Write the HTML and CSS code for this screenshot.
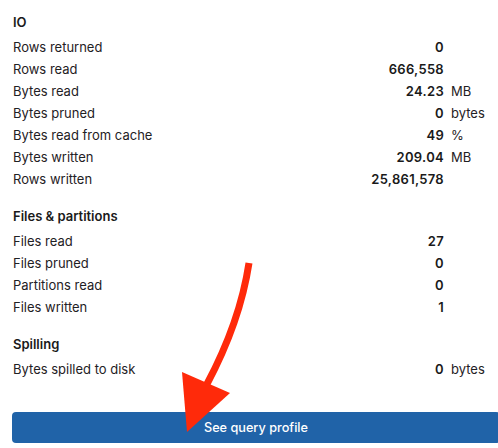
FILE: index.html
```html
<!DOCTYPE html>
<html>
<head>
<meta charset="utf-8">
<link rel="stylesheet" href="styles.css">
</head>
<body>
<div class="page">
  <section class="section">
    <h3 class="heading">IO</h3>
    <div class="grid">
      <span class="label">Rows returned</span><span class="value">0</span><span class="unit"></span>
      <span class="label">Rows read</span><span class="value">666,558</span><span class="unit"></span>
      <span class="label">Bytes read</span><span class="value">24.23</span><span class="unit">MB</span>
      <span class="label">Bytes pruned</span><span class="value">0</span><span class="unit">bytes</span>
      <span class="label">Bytes read from cache</span><span class="value">49</span><span class="unit">%</span>
      <span class="label">Bytes written</span><span class="value">209.04</span><span class="unit">MB</span>
      <span class="label">Rows written</span><span class="value">25,861,578</span><span class="unit"></span>
    </div>
  </section>
  <section class="section">
    <h3 class="heading">Files &amp; partitions</h3>
    <div class="grid">
      <span class="label">Files read</span><span class="value">27</span><span class="unit"></span>
      <span class="label">Files pruned</span><span class="value">0</span><span class="unit"></span>
      <span class="label">Partitions read</span><span class="value">0</span><span class="unit"></span>
      <span class="label">Files written</span><span class="value">1</span><span class="unit"></span>
    </div>
  </section>
  <section class="section">
    <h3 class="heading">Spilling</h3>
    <div class="grid">
      <span class="label">Bytes spilled to disk</span><span class="value">0</span><span class="unit">bytes</span>
    </div>
  </section>
  <button class="profile-btn">See query profile</button>
</div>
<svg class="arrow" width="498" height="448" viewBox="0 0 498 448">
  <path d="M249 263 Q240 322 207 384" fill="none" stroke="#ff2a0a" stroke-width="7" stroke-linecap="butt"/>
  <polygon points="182,372 230,393 187,432" fill="#ff2a0a"/>
</svg>
</body>
</html>
```

FILE: styles.css
```css
html, body {
  margin: 0;
  padding: 0;
  background: #ffffff;
  overflow: hidden;
}
body {
  width: 498px;
  height: 448px;
  position: relative;
  font-family: Inter, "Liberation Sans", sans-serif;
  font-size: 13px;
  color: #1f2124;
}
.page {
  padding: 11px 7px 0 13px;
}
.section + .section {
  margin-top: 15px;
}
.heading {
  margin: 0 0 3px 0;
  font-size: 13px;
  font-weight: 600;
  line-height: 22px;
  color: #1a1a1a;
}
.grid {
  display: grid;
  grid-template-columns: 1fr auto 47px;
  line-height: 22px;
}
.value {
  text-align: right;
  font-weight: 600;
  letter-spacing: 0.3px;
  color: #1a1a1a;
}
.unit {
  padding-left: 7px;
}
.profile-btn {
  display: block;
  margin: 32px 0 0 -1px;
  width: 488px;
  height: 31px;
  border: none;
  border-radius: 4px;
  background: #2063a8;
  color: #ffffff;
  font-family: Inter, "Liberation Sans", sans-serif;
  font-size: 12.7px;
  font-weight: 500;
  padding: 0;
}
.arrow {
  position: absolute;
  left: 0;
  top: 0;
  pointer-events: none;
}
```
